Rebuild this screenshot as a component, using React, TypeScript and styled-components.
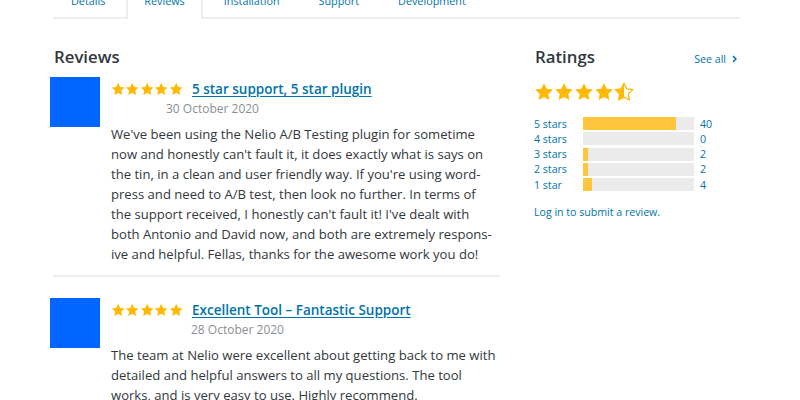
import styled, { createGlobalStyle } from "styled-components";

const GlobalStyle = createGlobalStyle`
  html, body {
    margin: 0;
    padding: 0;
    background: #fff;
    overflow: hidden;
  }
  body {
    font-family: "Open Sans", "Noto Sans", sans-serif;
    color: #32373c;
  }
`;

const STAR = "M10 1.2l2.7 5.6 6.1.8-4.5 4.3 1.1 6.1L10 15.1 4.6 18l1.1-6.1L1.2 7.6l6.1-.8z";

const Page = styled.div`
  width: 800px;
  height: 400px;
  box-sizing: border-box;
  padding: 0 60px 0 53px;
  overflow: hidden;
`;

const Tabs = styled.ul`
  display: flex;
  gap: 3px;
  list-style: none;
  margin: -16px 0 0;
  padding: 0;
  border-bottom: 2px solid #eeeeee;
`;

const Tab = styled.li<{ $active?: boolean }>`
  padding: 6px 16px;
  font-size: 10.8px;
  line-height: 18px;
  color: #0073aa;
  background: #fff;
  border: 2px solid ${(p) => (p.$active ? "#eeeeee" : "transparent")};
  border-bottom: none;
  margin-bottom: ${(p) => (p.$active ? "-2px" : "0")};
  padding-bottom: ${(p) => (p.$active ? "9px" : "7px")};
`;

const Columns = styled.div`
  display: flex;
  gap: 34px;
  padding-top: 26px;
`;

const LeftColumn = styled.section`
  width: 447px;
  flex-shrink: 0;
`;

const RightColumn = styled.aside`
  width: 206px;
  flex-shrink: 0;
`;

const SectionHead = styled.div`
  display: flex;
  justify-content: space-between;
  align-items: baseline;
`;

const Heading = styled.h2`
  margin: 0;
  font-size: 16.8px;
  line-height: 24px;
  font-weight: 600;
  color: #32373c;
  padding-left: 1px;
`;

const SeeAll = styled.a`
  font-size: 10.6px;
  color: #0073aa;
  text-decoration: none;
  display: flex;
  align-items: center;
  gap: 6px;
  margin-right: 3px;
`;

const ReviewList = styled.div`
  margin-top: 8px;
`;

const Review = styled.article`
  display: flex;
  gap: 11px;
  margin-left: -3px;
`;

const Avatar = styled.div`
  width: 50px;
  height: 50px;
  background: #0066ff;
  flex-shrink: 0;
`;

const ReviewBody = styled.div`
  flex: 1;
`;

const ReviewHeader = styled.div`
  display: flex;
  align-items: center;
  gap: 9px;
  height: 22px;
  margin-top: 1px;
`;

const StarRow = styled.div<{ $size: number; $gap: number }>`
  display: flex;
  gap: ${(p) => p.$gap}px;
  svg {
    width: ${(p) => p.$size}px;
    height: ${(p) => p.$size}px;
    display: block;
  }
`;

const ReviewTitle = styled.a`
  font-size: 13.5px;
  font-weight: 600;
  color: #0073aa;
  text-decoration: underline;
  text-underline-offset: 2px;
`;

const ReviewDate = styled.div<{ $offset: number }>`
  font-size: 12px;
  line-height: 17px;
  color: #8c8f94;
  padding-left: ${(p) => p.$offset}px;
`;

const ReviewText = styled.p`
  margin: 7px 0 0;
  padding-right: 4px;
  font-size: 13.1px;
  line-height: 20px;
  color: #32373c;
`;

const Divider = styled.hr`
  border: none;
  border-top: 2px solid #eeeeee;
  margin: 11px 0 21px;
`;

const BigStars = styled.div`
  margin-top: 13px;
`;

const RatingRows = styled.div`
  display: flex;
  flex-direction: column;
  gap: 2.3px;
  margin-top: 15px;
`;

const RatingRow = styled.div`
  display: flex;
  align-items: center;
  height: 13px;
  font-size: 10.6px;
  color: #0073aa;
`;

const RowLabel = styled.span`
  width: 49px;
`;

const Bar = styled.div`
  width: 111px;
  height: 13px;
  background: #ebebeb;
  margin-right: 6px;
`;

const BarFill = styled.div`
  height: 100%;
  background: #ffc53d;
`;

const LoginLink = styled.a`
  display: block;
  margin-top: 14px;
  font-size: 10.6px;
  color: #0073aa;
  text-decoration: none;
`;

const Star = ({ kind = "full" }: { kind?: "full" | "half" }) =>
  kind === "full" ? (
    <svg viewBox="0 0 20 20">
      <path d={STAR} fill="#ffb900" />
    </svg>
  ) : (
    <svg viewBox="0 0 20 20">
      <defs>
        <clipPath id="halfstar">
          <rect x="0" y="0" width="10" height="20" />
        </clipPath>
      </defs>
      <path d={STAR} fill="#fff" stroke="#ffb900" strokeWidth="1.3" strokeLinejoin="round" />
      <path d={STAR} fill="#ffb900" clipPath="url(#halfstar)" />
    </svg>
  );

const Stars = ({ rating, size, gap }: { rating: number; size: number; gap: number }) => (
  <StarRow $size={size} $gap={gap}>
    {[1, 2, 3, 4, 5].map((n) => (
      <Star key={n} kind={rating >= n ? "full" : "half"} />
    ))}
  </StarRow>
);

const reviews = [
  {
    title: "5 star support, 5 star plugin",
    date: "30 October 2020",
    dateOffset: 55,
    text: "We've been using the Nelio A/B Testing plugin for sometime now and honestly can't fault it, it does exactly what is says on the tin, in a clean and user friendly way. If you're using word\u00ADpress and need to A/B test, then look no further. In terms of the support received, I honestly can't fault it! I've dealt with both Antonio and David now, and both are extremely respons\u00ADive and helpful. Fellas, thanks for the awesome work you do!",
  },
  {
    title: "Excellent Tool \u2013 Fantastic Support",
    date: "28 October 2020",
    dateOffset: 80,
    text: "The team at Nelio were excellent about getting back to me with detailed and helpful answers to all my questions. The tool works, and is very easy to use. Highly recommend.",
  },
];

const ratings = [
  { label: "5 stars", count: 40 },
  { label: "4 stars", count: 0 },
  { label: "3 stars", count: 2 },
  { label: "2 stars", count: 2 },
  { label: "1 star", count: 4 },
];

const total = ratings.reduce((sum, r) => sum + r.count, 0);

const App = () => (
  <>
    <GlobalStyle />
    <Page>
      <Tabs>
        <Tab>Details</Tab>
        <Tab $active>Reviews</Tab>
        <Tab>Installation</Tab>
        <Tab>Support</Tab>
        <Tab>Development</Tab>
      </Tabs>
      <Columns>
        <LeftColumn>
          <Heading>Reviews</Heading>
          <ReviewList>
            {reviews.map((r, i) => (
              <div key={r.title}>
                {i > 0 && <Divider />}
                <Review>
                  <Avatar />
                  <ReviewBody>
                    <ReviewHeader>
                      <Stars rating={5} size={14.4} gap={0} />
                      <ReviewTitle href="#">{r.title}</ReviewTitle>
                    </ReviewHeader>
                    <ReviewDate $offset={r.dateOffset}>{r.date}</ReviewDate>
                    <ReviewText>{r.text}</ReviewText>
                  </ReviewBody>
                </Review>
              </div>
            ))}
          </ReviewList>
        </LeftColumn>
        <RightColumn>
          <SectionHead>
            <Heading>Ratings</Heading>
            <SeeAll href="#">
              See all
              <svg width="5" height="8" viewBox="0 0 5 8">
                <path d="M1 1l3 3-3 3" fill="none" stroke="#0073aa" strokeWidth="1.5" />
              </svg>
            </SeeAll>
          </SectionHead>
          <BigStars>
            <Stars rating={4.5} size={20} gap={0} />
          </BigStars>
          <RatingRows>
            {ratings.map((r) => (
              <RatingRow key={r.label}>
                <RowLabel>{r.label}</RowLabel>
                <Bar>
                  <BarFill style={{ width: `${(r.count / total) * 100}%` }} />
                </Bar>
                <span>{r.count}</span>
              </RatingRow>
            ))}
          </RatingRows>
          <LoginLink href="#">Log in to submit a review.</LoginLink>
        </RightColumn>
      </Columns>
    </Page>
  </>
);

export default App;
